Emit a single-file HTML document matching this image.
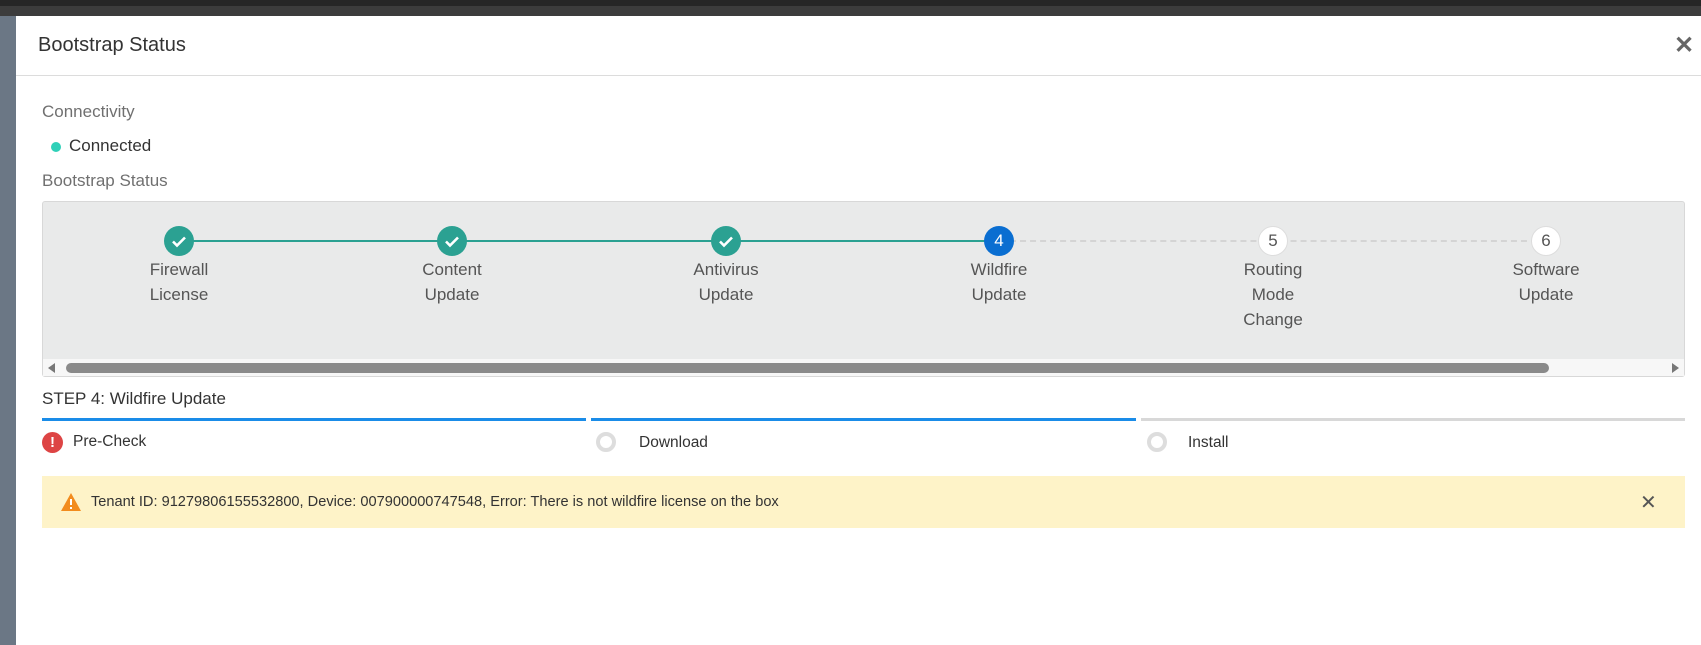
<!DOCTYPE html>
<html><head><meta charset="utf-8"><style>
*{margin:0;padding:0;box-sizing:border-box}
body{width:1701px;height:645px;overflow:hidden;background:#6b7785;font-family:"Liberation Sans",sans-serif;position:relative}
.top{position:absolute;left:0;top:0;width:1701px;height:16px;background:#3c3c3c}
.top2{position:absolute;left:0;top:0;width:1701px;height:6px;background:#262626}
.modal{position:absolute;left:16px;top:16px;width:1685px;height:629px;background:#fff}
.a{position:absolute;white-space:nowrap}
.hdr{position:absolute;left:0;top:59px;width:100%;height:1px;background:#dcdcdc}
.box{position:absolute;left:26px;top:185px;width:1643px;height:176px;background:#e9eaea;border:1px solid #d8d8d8;border-radius:3px}
.sb{position:absolute;left:0;bottom:0;width:100%;height:17px;background:#f7f7f7}
.thumb{position:absolute;left:23px;top:4px;width:1483px;height:10px;border-radius:5px;background:#8a8a8a}
.c{position:absolute;width:30px;height:30px;border-radius:50%;top:24px;text-align:center;line-height:30px;font-size:17px}
.done{background:#2ba192}
.cur{background:#0a6ed1;color:#fff}
.todo{background:#fff;color:#555;border:1px solid #ddd;line-height:28px}
.lbl{position:absolute;top:55px;width:160px;text-align:center;font-size:17px;color:#555;line-height:25px}
.seg{position:absolute;top:402px;height:3px}
.ring{position:absolute;width:20px;height:20px;border-radius:50%;border:4px solid #ddd;top:416px}
</style></head><body>
<div class="top"></div><div class="top2"></div>
<div class="modal">
<div class="a" style="left:22px;top:18px;font-size:20px;color:#333">Bootstrap Status</div>
<div class="a" style="left:1658px;top:15px;font-size:24px;color:#666;font-weight:bold">✕</div>
<div class="hdr"></div>
<div class="a" style="left:26px;top:86px;font-size:17px;color:#707070">Connectivity</div>
<div class="a" style="left:35px;top:126px;width:10px;height:10px;border-radius:50%;background:#2fd0b8"></div>
<div class="a" style="left:53px;top:120px;font-size:17px;color:#333">Connected</div>
<div class="a" style="left:26px;top:155px;font-size:17px;color:#707070">Bootstrap Status</div>
<div class="box">
 <div class="a" style="left:137px;top:38px;width:820px;height:2px;background:#2ba192"></div>
 <div class="a" style="left:957px;top:38px;width:547px;border-top:2px dashed #d4d4d4"></div>
 <div class="c done" style="left:121px"><svg width="30" height="30"><path d="M9 15.5l4 4 8-8" stroke="#fff" stroke-width="2.6" fill="none"/></svg></div>
 <div class="c done" style="left:394px"><svg width="30" height="30"><path d="M9 15.5l4 4 8-8" stroke="#fff" stroke-width="2.6" fill="none"/></svg></div>
 <div class="c done" style="left:668px"><svg width="30" height="30"><path d="M9 15.5l4 4 8-8" stroke="#fff" stroke-width="2.6" fill="none"/></svg></div>
 <div class="c cur" style="left:941px">4</div>
 <div class="c todo" style="left:1215px">5</div>
 <div class="c todo" style="left:1488px">6</div>
 <div class="lbl" style="left:56px">Firewall<br>License</div>
 <div class="lbl" style="left:329px">Content<br>Update</div>
 <div class="lbl" style="left:603px">Antivirus<br>Update</div>
 <div class="lbl" style="left:876px">Wildfire<br>Update</div>
 <div class="lbl" style="left:1150px">Routing<br>Mode<br>Change</div>
 <div class="lbl" style="left:1423px">Software<br>Update</div>
 <div class="sb"><div class="a" style="left:5px;top:4px;border-right:7px solid #777;border-top:5px solid transparent;border-bottom:5px solid transparent"></div><div class="thumb"></div><div class="a" style="right:5px;top:4px;border-left:7px solid #777;border-top:5px solid transparent;border-bottom:5px solid transparent"></div></div>
</div>
<div class="a" style="left:26px;top:373px;font-size:17px;color:#333">STEP 4: Wildfire Update</div>
<div class="seg" style="left:26px;width:544px;background:#1a8ce8"></div>
<div class="seg" style="left:575px;width:545px;background:#1a8ce8"></div>
<div class="seg" style="left:1125px;width:544px;background:#d8d8d8"></div>
<div class="a" style="left:26px;top:416px;width:21px;height:21px;border-radius:50%;background:#dd4444;color:#fff;text-align:center;font-weight:bold;font-size:15px;line-height:21px">!</div>
<div class="a" style="left:57px;top:417px;font-size:15.5px;color:#333">Pre-Check</div>
<div class="ring" style="left:580px"></div>
<div class="a" style="left:623px;top:418px;font-size:15.5px;color:#333">Download</div>
<div class="ring" style="left:1131px"></div>
<div class="a" style="left:1172px;top:418px;font-size:15.5px;color:#333">Install</div>
<div class="a" style="left:26px;top:460px;width:1643px;height:52px;background:#fef3c8"></div>
<svg class="a" style="left:44px;top:476px" width="22" height="20"><path d="M11 1L21 19H1Z" fill="#f28c1e"/><rect x="10" y="7" width="2" height="6" fill="#fff"/><rect x="10" y="15" width="2" height="2" fill="#fff"/></svg>
<div class="a" style="left:75px;top:478px;font-size:14.6px;color:#333">Tenant ID: 91279806155532800, Device: 007900000747548, Error: There is not wildfire license on the box</div>
<div class="a" style="left:1624px;top:474px;font-size:20px;color:#555">✕</div>
</div>
</body></html>
